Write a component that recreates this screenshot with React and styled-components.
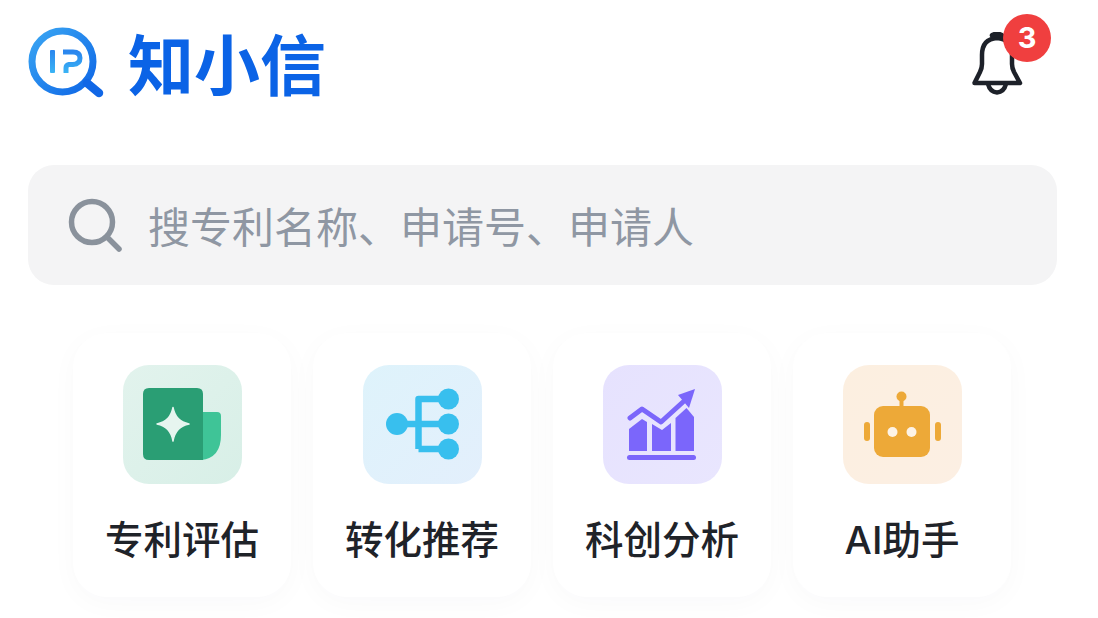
import React from "react";
import styled, { createGlobalStyle } from "styled-components";

const Global = createGlobalStyle`
  html, body { margin: 0; padding: 0; background: #fff; height: 100%; overflow: hidden; }
  body { font-family: "Inter", "Noto Sans CJK SC", sans-serif; }
`;

const Page = styled.div`
  width: 1098px;
  height: 618px;
  box-sizing: border-box;
  padding: 28px 41px 0 28px;
  overflow: hidden;
  background: #fff;
`;

const Header = styled.header`
  display: flex;
  align-items: flex-start;
  justify-content: space-between;
  height: 70px;
`;

const Brand = styled.div`
  display: flex;
  align-items: center;
  gap: 24px;
  height: 70px;
`;

const BrandName = styled.span`
  font-family: "Noto Sans CJK SC", sans-serif;
  font-weight: 700;
  font-size: 66px;
  line-height: 62px;
  padding-bottom: 5px;
  color: #0b63e6;
  white-space: nowrap;
`;

const LogoSvg = styled.svg`
  overflow: visible;
  flex: none;
`;

const BellWrap = styled.div`
  position: relative;
  width: 52px;
  height: 66px;
  margin: 4px 33px 0 0;
`;

const Badge = styled.span`
  position: absolute;
  left: 31px;
  top: -18px;
  width: 48px;
  height: 48px;
  border-radius: 50%;
  background: #f03f3f;
  color: #fff;
  font-family: "Inter", sans-serif;
  font-weight: 700;
  font-size: 29px;
  line-height: 48px;
  text-align: center;
`;

const SearchBar = styled.div`
  display: flex;
  align-items: center;
  gap: 26px;
  height: 120px;
  margin-top: 67px;
  padding-left: 40px;
  border-radius: 26px;
  background: #f4f4f5;
`;

const Placeholder = styled.span`
  font-family: "Noto Sans CJK SC", sans-serif;
  font-size: 42px;
  line-height: 60px;
  color: #8f97a3;
  white-space: nowrap;
`;

const CardRow = styled.div`
  display: grid;
  grid-template-columns: repeat(4, 218px);
  gap: 22px;
  margin: 48px 0 0 45px;
`;

const Card = styled.div`
  display: flex;
  flex-direction: column;
  align-items: center;
  height: 264px;
  box-sizing: border-box;
  padding-top: 32px;
  border-radius: 34px;
  background: #fff;
  box-shadow: 0 6px 28px rgba(30, 50, 90, 0.028);
`;

const Tile = styled.div`
  width: 119px;
  height: 119px;
  border-radius: 26px;
  background: ${(p) => p.$bg};
  display: flex;
`;

const Label = styled.span`
  margin-top: 30px;
  font-family: "Inter", "Noto Sans CJK SC", sans-serif;
  font-weight: 500;
  font-size: 38.5px;
  line-height: 52px;
  color: #1f2329;
  white-space: nowrap;
`;

const LogoMark = () => (
  <LogoSvg width="76" height="70" viewBox="28 28 76 70" fill="none">
    <defs>
      <linearGradient id="lg" x1="0" y1="0" x2="1" y2="1">
        <stop offset="0" stopColor="#3aa6f3" />
        <stop offset="1" stopColor="#0e66e6" />
      </linearGradient>
      <linearGradient id="lg2" x1="0" y1="0" x2="0" y2="1">
        <stop offset="0" stopColor="#2a86ee" />
        <stop offset="1" stopColor="#3ab4f5" />
      </linearGradient>
    </defs>
    <circle cx="62.500" cy="61.500" r="30.500" stroke="url(#lg)" strokeWidth="7" />
    <path d="M87 83 L99 93" stroke="#1167e6" strokeWidth="8.500" strokeLinecap="round" />
    <rect x="50" y="50" width="5" height="23" rx="1" fill="url(#lg2)" />
    <path d="M63 52 H73 Q80 52 80 58 Q80 64 73 64.500 H69 Q66 65 66 68 V73" stroke="url(#lg2)" strokeWidth="5" fill="none" />
  </LogoSvg>
);

const Bell = () => (
  <svg width="52" height="66" viewBox="972 32 52 66" fill="none" stroke="#1d2129" strokeWidth="4.500" strokeLinejoin="round" strokeLinecap="round">
    <path d="M974.500 83 L980 72 Q982 68 982 64 V55 Q982 39 997 38 Q1012 39 1012 55 V64 Q1012 68 1014 72 L1020 83 Z" />
    <path d="M992.500 35.500 Q997 33 1001.500 35.500" strokeWidth="5.500" />
    <path d="M988 84 Q990 92 997 92.500 Q1004 92 1006 84" />
  </svg>
);

const SearchIcon = () => (
  <svg width="54" height="54" viewBox="0 0 54 54" fill="none" stroke="#8a929c" strokeWidth="5.500" strokeLinecap="round">
    <circle cx="24" cy="24" r="20.500" />
    <path d="M39 39 L51 51" />
  </svg>
);

const Doc = () => (
  <svg width="119" height="119" viewBox="0 0 119 119">
    <path d="M80 47 H94 Q98 47 98 51 V70 Q98 93 78 95 L80 95 Z" fill="#3fc497" />
    <path d="M26 23 H74 Q80 23 80 29 V95 H26 Q20 95 20 89 V29 Q20 23 26 23 Z" fill="#2a9e74" />
    <path d="M50 42.500 Q52.500 56.500 66 59 Q52.500 61.500 50 76 Q47.500 61.500 34 59 Q47.500 56.500 50 42.500 Z" fill="#e6f5ef" stroke="#e6f5ef" strokeWidth="1.500" strokeLinejoin="round" />
  </svg>
);

const Tree = () => (
  <svg width="119" height="119" viewBox="0 0 119 119" fill="#38bfee">
    <circle cx="34" cy="59" r="11" />
    <circle cx="85.500" cy="34" r="10.500" />
    <circle cx="85.500" cy="59" r="10.500" />
    <circle cx="85.500" cy="84" r="10.500" />
    <path d="M40 59 H80 M55.500 84 V34 H80 M55.500 84 H80" fill="none" stroke="#38bfee" strokeWidth="6.500" strokeLinejoin="round" />
  </svg>
);

const Chart = () => (
  <svg width="119" height="119" viewBox="0 0 119 119" fill="#7b66fb">
    <path d="M26 64 L39 54 L44 57 V86 H26 Z" />
    <path d="M49 59 L59 65 L68 58 V86 H49 Z" />
    <path d="M72.500 53 L83.500 43 L91 52 V86 H72.500 Z" />
    <path d="M27 53 L39 44 L58 57 L80 37" fill="none" stroke="#7b66fb" strokeWidth="5" strokeLinecap="round" strokeLinejoin="round" />
    <path d="M92 24 L75 30 L86 43 Z" />
    <rect x="24" y="90" width="69" height="5" rx="2.500" />
  </svg>
);

const Robot = () => (
  <svg width="119" height="119" viewBox="0 0 119 119" fill="#eda938">
    <circle cx="58.500" cy="31.500" r="5" />
    <rect x="56.500" y="31" width="4" height="11" />
    <rect x="31" y="41" width="56" height="51" rx="9" />
    <rect x="21" y="57" width="6" height="19" rx="3" />
    <rect x="92" y="57" width="6" height="19" rx="3" />
    <circle cx="49.500" cy="67" r="5" fill="#fdf3e6" />
    <circle cx="68.500" cy="67" r="5" fill="#fdf3e6" />
  </svg>
);

const items = [
  { label: "专利评估", bg: "linear-gradient(135deg,#e2f3ed,#d8efe7)", Icon: Doc },
  { label: "转化推荐", bg: "linear-gradient(135deg,#def3fb,#e3effc)", Icon: Tree },
  { label: "科创分析", bg: "linear-gradient(135deg,#e6e2fe,#e9e6fe)", Icon: Chart },
  { label: "AI助手", bg: "linear-gradient(135deg,#fcefe0,#fcefe3)", Icon: Robot },
];

export default function App() {
  return (
    <Page>
      <Global />
      <Header>
        <Brand>
          <LogoMark />
          <BrandName>知小信</BrandName>
        </Brand>
        <BellWrap>
          <Bell />
          <Badge>3</Badge>
        </BellWrap>
      </Header>
      <SearchBar>
        <SearchIcon />
        <Placeholder>搜专利名称、申请号、申请人</Placeholder>
      </SearchBar>
      <CardRow>
        {items.map(({ label, bg, Icon }) => (
          <Card key={label}>
            <Tile $bg={bg}>
              <Icon />
            </Tile>
            <Label>{label}</Label>
          </Card>
        ))}
      </CardRow>
    </Page>
  );
}
